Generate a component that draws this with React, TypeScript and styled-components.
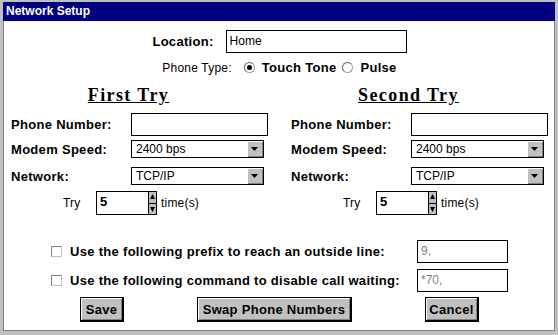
import styled, { createGlobalStyle } from 'styled-components';

const Global = createGlobalStyle`
  html, body { margin: 0; padding: 0; background: #c0c0c0; }
  body { font-family: "Liberation Sans", Arial, sans-serif; }
`;

const Window = styled.div`
  width: 558px;
  height: 335px;
  box-sizing: border-box;
  border-top: 2px solid #c0c0c0;
  border-left: 3px solid #c0c0c0;
  border-right: 3px solid #c0c0c0;
  border-bottom: 4px solid #c0c0c0;
  box-shadow: inset 1px 0 0 #808080, inset -1px 0 0 #808080, inset 0 -1px 0 #808080;
  background: #fff;
  display: flex;
  flex-direction: column;
`;

const TitleBar = styled.div`
  height: 19px;
  background: #000080;
  color: #fff;
  font-weight: bold;
  font-size: 12px;
  line-height: 19px;
  padding-left: 3px;
`;

const Body = styled.div`
  flex: 1;
  display: flex;
  flex-direction: column;
  padding: 9px 7px 0 7px;
  border-left: 1px solid #808080;
  border-bottom: 1px solid #808080;
`;

const CenterRow = styled.div<{ $gap?: number; $mt?: number }>`
  display: flex;
  justify-content: center;
  align-items: center;
  gap: ${(p) => p.$gap ?? 0}px;
  margin-top: ${(p) => p.$mt ?? 0}px;
`;

const BoldLabel = styled.span<{ $size?: number }>`
  font-weight: bold;
  font-size: ${(p) => p.$size ?? 13}px;
  letter-spacing: 0.3px;
  color: #000;
  white-space: nowrap;
`;

const PlainLabel = styled.span`
  font-size: 12px;
  letter-spacing: 0.2px;
  color: #000;
  white-space: nowrap;
`;

const TextBox = styled.div<{ $w: number; $h?: number; $disabled?: boolean }>`
  width: ${(p) => p.$w}px;
  height: ${(p) => p.$h ?? 23}px;
  box-sizing: border-box;
  border: 1px solid #000;
  background: #fff;
  font-size: 12px;
  line-height: 20px;
  padding-left: 3px;
  color: ${(p) => (p.$disabled ? '#808080' : '#000')};
`;

const RadioGroup = styled.label`
  display: flex;
  align-items: center;
  gap: 7px;
`;

const RadioCircle = styled.span<{ $checked?: boolean }>`
  width: 11px;
  height: 11px;
  box-sizing: border-box;
  border-radius: 50%;
  border: 1px solid #a0a0a0;
  border-top-color: #606060;
  border-left-color: #606060;
  background: #fff;
  display: flex;
  align-items: center;
  justify-content: center;
  &::after {
    content: '';
    width: 5px;
    height: 5px;
    border-radius: 50%;
    background: ${(p) => (p.$checked ? '#000' : 'transparent')};
  }
`;

const Columns = styled.div`
  display: grid;
  grid-template-columns: 257px 257px;
  column-gap: 23px;
  margin-top: 9px;
`;

const Column = styled.div`
  display: flex;
  flex-direction: column;
`;

const Heading = styled.div`
  font-family: "Liberation Serif", "Times New Roman", serif;
  font-weight: bold;
  font-size: 18px;
  letter-spacing: 1.4px;
  text-decoration: underline;
  text-align: center;
  padding-right: 22px;
  height: 22px;
  line-height: 22px;
`;

const FieldRow = styled.div<{ $mt: number }>`
  display: grid;
  grid-template-columns: 120px 1fr;
  align-items: center;
  margin-top: ${(p) => p.$mt}px;
`;

const Select = styled.div`
  width: 133px;
  height: 18px;
  box-sizing: border-box;
  border: 1px solid #000;
  display: flex;
  align-items: stretch;
  font-size: 12px;
`;

const SelectValue = styled.div`
  flex: 1;
  padding-left: 4px;
  line-height: 16px;
`;

const ArrowButton = styled.div`
  width: 16px;
  background: #c0c0c0;
  box-shadow: inset 1px 1px 0 #fff, inset -1px -1px 0 #808080;
  display: flex;
  align-items: center;
  justify-content: center;
`;

const TryRow = styled.div`
  display: flex;
  align-items: center;
  margin-top: 6px;
  padding-left: 52px;
`;

const Spinner = styled.div`
  width: 8px;
  height: 24px;
  box-sizing: border-box;
  border: 1px solid #000;
  border-left: none;
  background: #c0c0c0;
  display: flex;
  flex-direction: column;
`;

const SpinHalf = styled.div<{ $top?: boolean }>`
  flex: 1;
  display: flex;
  align-items: center;
  justify-content: center;
  border-bottom: ${(p) => (p.$top ? '1px solid #000' : 'none')};
`;

const OptionGrid = styled.div`
  display: grid;
  grid-template-columns: auto 91px;
  column-gap: 17px;
  row-gap: 6px;
  justify-content: center;
  align-items: center;
  margin-top: 25px;
`;

const CheckLabel = styled.label`
  display: flex;
  align-items: center;
  gap: 8px;
`;

const CheckBox = styled.span`
  width: 11px;
  height: 11px;
  box-sizing: border-box;
  border: 1px solid #808080;
  border-right-color: #c0c0c0;
  border-bottom-color: #c0c0c0;
  background: #fff;
`;

const ButtonRow = styled.div`
  display: flex;
  justify-content: center;
  gap: 73px;
  margin-top: 5px;
`;

const Button = styled.button<{ $w: number }>`
  width: ${(p) => p.$w}px;
  height: 25px;
  box-sizing: border-box;
  font-family: "Liberation Sans", Arial, sans-serif;
  font-weight: bold;
  font-size: 13px;
  letter-spacing: 0.3px;
  color: #000;
  background: #c0c0c0;
  border: 1px solid #000;
  border-right-width: 2px;
  border-bottom-width: 2px;
  box-shadow: inset 1px 1px 0 #fff, inset -1px -1px 0 #808080;
  padding: 0;
`;

const DownArrow = () => (
  <svg width="8" height="5" viewBox="0 0 8 5">
    <path d="M0 0h7L3.5 4z" fill="#000" />
  </svg>
);

const PhoneColumn = ({ title }: { title: string }) => (
  <Column>
    <Heading>{title}</Heading>
    <FieldRow $mt={7}>
      <BoldLabel>Phone Number:</BoldLabel>
      <TextBox $w={137} />
    </FieldRow>
    <FieldRow $mt={4}>
      <BoldLabel>Modem Speed:</BoldLabel>
      <Select>
        <SelectValue>2400 bps</SelectValue>
        <ArrowButton>
          <DownArrow />
        </ArrowButton>
      </Select>
    </FieldRow>
    <FieldRow $mt={9}>
      <BoldLabel>Network:</BoldLabel>
      <Select>
        <SelectValue>TCP/IP</SelectValue>
        <ArrowButton>
          <DownArrow />
        </ArrowButton>
      </Select>
    </FieldRow>
    <TryRow>
      <PlainLabel style={{ width: 33 }}>Try</PlainLabel>
      <TextBox $w={53} $h={24}>
        <BoldLabel>5</BoldLabel>
      </TextBox>
      <Spinner>
        <SpinHalf $top>
          <svg width="5" height="6" viewBox="0 0 5 6">
            <path d="M2.5 0L5 5H0z" fill="#000" />
          </svg>
        </SpinHalf>
        <SpinHalf>
          <svg width="5" height="6" viewBox="0 0 5 6">
            <path d="M0 1h5L2.5 6z" fill="#000" />
          </svg>
        </SpinHalf>
      </Spinner>
      <PlainLabel style={{ marginLeft: 4 }}>time(s)</PlainLabel>
    </TryRow>
  </Column>
);

export default function App() {
  return (
    <>
      <Global />
      <Window>
        <TitleBar>Network Setup</TitleBar>
        <Body>
          <CenterRow $gap={12}>
            <BoldLabel>Location:</BoldLabel>
            <TextBox $w={181}>Home</TextBox>
          </CenterRow>
          <CenterRow $gap={12} $mt={7}>
            <PlainLabel>Phone Type:</PlainLabel>
            <RadioGroup>
              <RadioCircle $checked />
              <BoldLabel>Touch Tone</BoldLabel>
            </RadioGroup>
            <RadioGroup style={{ marginLeft: -6 }}>
              <RadioCircle />
              <BoldLabel>Pulse</BoldLabel>
            </RadioGroup>
          </CenterRow>
          <Columns>
            <PhoneColumn title="First Try" />
            <PhoneColumn title="Second Try" />
          </Columns>
          <OptionGrid>
            <CheckLabel>
              <CheckBox />
              <BoldLabel>Use the following prefix to reach an outside line:</BoldLabel>
            </CheckLabel>
            <TextBox $w={91} $disabled>9,</TextBox>
            <CheckLabel>
              <CheckBox />
              <BoldLabel>Use the following command to disable call waiting:</BoldLabel>
            </CheckLabel>
            <TextBox $w={91} $disabled>*70,</TextBox>
          </OptionGrid>
          <ButtonRow>
            <Button $w={44}>Save</Button>
            <Button $w={155}>Swap Phone Numbers</Button>
            <Button $w={54}>Cancel</Button>
          </ButtonRow>
        </Body>
      </Window>
    </>
  );
}
